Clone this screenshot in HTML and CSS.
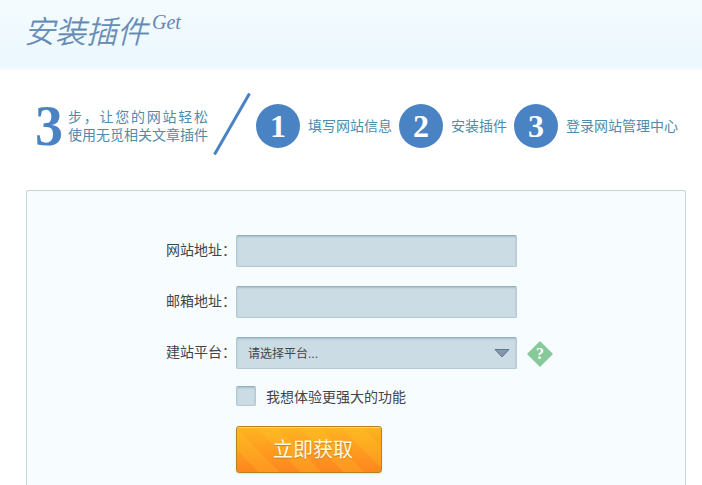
FILE: index.html
```html
<!DOCTYPE html>
<html lang="zh-CN">
<head>
<meta charset="utf-8">
<title>安装插件</title>
<link rel="stylesheet" href="styles.css">
</head>
<body>
<header class="header">
  <h1 class="title">安装插件 <span class="title-en">Get</span></h1>
</header>
<main class="main">
  <section class="steps">
    <span class="big-number">3</span>
    <p class="intro"><span>步，让您的网站轻松</span><span>使用无觅相关文章插件</span></p>
    <svg class="slash" viewBox="0 0 38 64" aria-hidden="true"><path d="M1.500 62.500 36.500 1.500"/></svg>
    <ol class="step-list">
      <li class="step"><span class="badge">1</span>填写网站信息</li>
      <li class="step"><span class="badge">2</span>安装插件</li>
      <li class="step"><span class="badge">3</span>登录网站管理中心</li>
    </ol>
  </section>
  <form class="panel">
    <div class="row">
      <label class="label" for="site">网站地址：</label>
      <input class="field" id="site" type="text">
    </div>
    <div class="row">
      <label class="label" for="mail">邮箱地址：</label>
      <input class="field" id="mail" type="email">
    </div>
    <div class="row">
      <label class="label" for="platform">建站平台：</label>
      <div class="select-wrap">
        <select class="field select" id="platform"><option>请选择平台...</option></select>
        <svg class="arrow" viewBox="0 0 16 9" aria-hidden="true"><path d="M1 .5H15L8 8Z"/></svg>
      </div>
      <a class="help" href="#help" aria-label="帮助"><span class="help-mark">?</span></a>
    </div>
    <div class="check-row">
      <input class="check" id="more" type="checkbox">
      <label class="check-label" for="more">我想体验更强大的功能</label>
    </div>
    <button class="submit" type="submit">立即获取</button>
  </form>
</main>
</body>
</html>
```

FILE: styles.css
```css
* { box-sizing: border-box; }

body {
  margin: 0;
  min-height: 100vh;
  display: flex;
  flex-direction: column;
  background: #fff;
  color: #444;
  font: 14px/18px "Liberation Sans", "Noto Sans CJK SC", sans-serif;
}

.header {
  height: 70px;
  padding: 7px 24px;
  background: linear-gradient(#f4fbfe, #ebf8fe 66px, #f8fdff);
}

.title {
  display: flex;
  align-items: flex-start;
  gap: 4px;
  margin: 0;
  color: #6489b2;
  font: italic 300 31px/46px "Noto Sans CJK SC", sans-serif;
  -webkit-text-stroke: 0.4px #6489b2;
}

.title-en {
  font: italic 20px/30px "Liberation Serif", serif;
  -webkit-text-stroke: 0;
}

.main {
  flex: 1;
  display: flex;
  flex-direction: column;
  padding: 20px 16px 0 26px;
}

.steps {
  display: flex;
  align-items: center;
  height: 72px;
  color: #4f8bab;
}

.big-number {
  width: 42px;
  padding-left: 9px;
  color: #4a83c4;
  font: bold 56px/60px "Liberation Serif", serif;
}

.intro {
  display: grid;
  width: 140px;
  margin: 0;
  white-space: nowrap;
}

.intro span { text-align-last: justify; }

.slash {
  width: 38px;
  height: 64px;
  margin: 0 5px 4px;
  fill: none;
  stroke: #4a83c4;
  stroke-width: 3;
}

.step-list {
  display: flex;
  gap: 7px;
  margin: 0;
  padding: 0;
  list-style: none;
  white-space: nowrap;
}

.step {
  display: flex;
  align-items: center;
  gap: 8px;
}

.badge {
  width: 44px;
  height: 44px;
  border-radius: 50%;
  background: #4a83c4;
  color: #fff;
  font: bold 32px/44px "Liberation Serif", serif;
  text-align: center;
}

.panel {
  flex: 1;
  margin-top: 28px;
  padding: 44px 16px 12px 132px;
  border: 1px solid #c3d7df;
  border-bottom: 0;
  border-radius: 3px 3px 0 0;
  background: #f7fdff;
}

.row {
  display: flex;
  align-items: center;
  margin-bottom: 19px;
}

.label {
  width: 77px;
  padding: 0 0 2px 7px;
  white-space: nowrap;
}

.field {
  width: 281px;
  height: 32px;
  padding: 0 11px;
  border: 1px solid #b3c9d3;
  border-top-color: #94afbe;
  border-radius: 2px;
  background: #cbdce4;
  box-shadow: inset 0 1px 2px #a5bfcc;
  color: #444;
  font: 12px/18px "Liberation Sans", "Noto Sans CJK SC", sans-serif;
}

.select-wrap { position: relative; }

.select {
  display: block;
  padding-top: 2px;
  appearance: none;
}

.arrow {
  position: absolute;
  top: 12px;
  right: 7px;
  width: 16px;
  height: 9px;
  fill: #8298b1;
  stroke: #617790;
  pointer-events: none;
}

.help {
  display: grid;
  place-items: center;
  width: 26px;
  height: 26px;
  margin: 2px 0 0 10px;
  background: #88c999;
  clip-path: polygon(50% 0, 100% 50%, 50% 100%, 0 50%);
  color: #fff;
  font: bold 16px/26px "Liberation Serif", serif;
  text-decoration: none;
}

.check-row {
  display: flex;
  align-items: center;
  gap: 10px;
  margin: -2px 0 20px 77px;
}

.check-label { padding-top: 2px; }

.check {
  appearance: none;
  width: 20px;
  height: 20px;
  margin: 0;
  border: 1px solid #b3c9d3;
  border-top-color: #94afbe;
  border-radius: 2px;
  background: #cbdce4;
  box-shadow: inset 0 1px 2px #a5bfcc;
}

.check:checked { background: #4a83c4; }

.submit {
  display: block;
  width: 146px;
  height: 47px;
  margin-left: 77px;
  padding: 0 0 2px 8px;
  border: 1px solid #b98322;
  border-radius: 3px;
  background:
    linear-gradient(rgba(253, 190, 34, .85), rgba(255, 140, 30, .6)),
    repeating-linear-gradient(45deg, #ff7c20 0 15px, #ffa225 15px 30px);
  box-shadow: inset 0 1px #ffd45a, 0 1px 2px #d8dde0;
  color: #fffbe0;
  font: 20px/26px "Noto Sans CJK SC", sans-serif;
  text-shadow: 0 1px 1px #c87d1a;
}
```
